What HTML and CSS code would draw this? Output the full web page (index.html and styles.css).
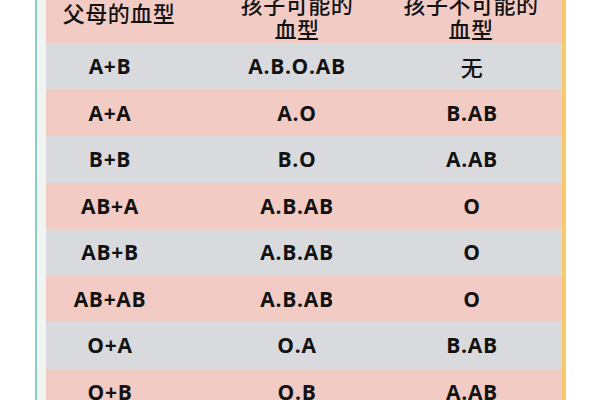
FILE: index.html
```html
<!DOCTYPE html>
<html lang="zh">
<head>
<meta charset="utf-8">
<title>父母的血型</title>
<link rel="stylesheet" href="styles.css">
</head>
<body>
<div class="frame">
  <div class="table">
    <div class="row head pink">
      <div class="cell c1 h1">父母的血型</div>
      <div class="cell c2"><span class="lines">孩子可能的<br>血型</span></div>
      <div class="cell c3"><span class="lines">孩子不可能的<br>血型</span></div>
    </div>
    <div class="row gray"><div class="cell c1">A+B</div><div class="cell c2">A.B.O.AB</div><div class="cell c3 cjk">无</div></div>
    <div class="row pink"><div class="cell c1">A+A</div><div class="cell c2">A.O</div><div class="cell c3">B.AB</div></div>
    <div class="row gray"><div class="cell c1">B+B</div><div class="cell c2">B.O</div><div class="cell c3">A.AB</div></div>
    <div class="row pink"><div class="cell c1">AB+A</div><div class="cell c2">A.B.AB</div><div class="cell c3">O</div></div>
    <div class="row gray"><div class="cell c1">AB+B</div><div class="cell c2">A.B.AB</div><div class="cell c3">O</div></div>
    <div class="row pink"><div class="cell c1">AB+AB</div><div class="cell c2">A.B.AB</div><div class="cell c3">O</div></div>
    <div class="row gray"><div class="cell c1">O+A</div><div class="cell c2">O.A</div><div class="cell c3">B.AB</div></div>
    <div class="row pink"><div class="cell c1">O+B</div><div class="cell c2">O.B</div><div class="cell c3">A.AB</div></div>
  </div>
</div>
</body>
</html>
```
FILE: styles.css
```css
html, body {
  margin: 0;
  padding: 0;
  background: #ffffff;
  overflow: hidden;
}
body {
  height: 400px;
}
.frame {
  margin: -12px 0 0 35px;
  width: 516px;
  padding-left: 9px;
  border-left: 2px solid #86cfc6;
  border-right: 4px solid #f6ca68;
  background: #f2f4f2;
}
.table {
  display: flex;
  flex-direction: column;
}
.row {
  display: grid;
  grid-template-columns: 128px 246px 142px;
  height: 46.5px;
  align-items: center;
  font-family: "Open Sans", "Noto Sans CJK SC", sans-serif;
  font-weight: 700;
  font-size: 21px;
  letter-spacing: 0.7px;
  color: #121212;
}
.pink { background: #f3cbc5; }
.gray { background: #d9dadd; }
.cell {
  display: flex;
  flex-direction: column;
  align-items: center;
  text-align: center;
  white-space: nowrap;
}
.c3 { padding-right: 38px; }
.cjk {
  font-family: "Noto Sans CJK SC", sans-serif;
  font-weight: 500;
  font-size: 22px;
}
.lines {
  display: block;
  text-align: center;
}
.head {
  height: 55px;
  font-family: "Noto Sans CJK SC", sans-serif;
  font-weight: 500;
  font-size: 22px;
  line-height: 25px;
  letter-spacing: 0.5px;
  background: #f3cbc5;
}
.head .h1 {
  padding-left: 18px;
  padding-bottom: 6px;
}
.head .c3 {
  padding-right: 40px;
}
```
